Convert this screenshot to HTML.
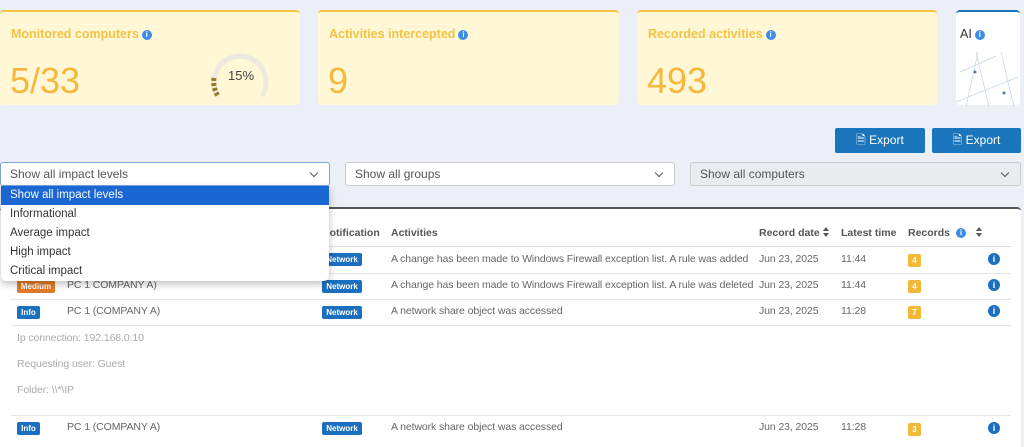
<!DOCTYPE html>
<html><head><meta charset="utf-8"><style>
*{box-sizing:border-box;margin:0;padding:0}
body{width:1024px;height:441px;overflow:hidden;background:#eceff5;font-family:"Liberation Sans",sans-serif;position:relative;color:#555}
.card{position:absolute;top:10px;height:95px;background:#fff7d6;border-top:2px solid #f5c242;border-radius:4px}
.card .t{position:absolute;left:11px;top:15px;font-size:12.5px;font-weight:bold;color:#f5c242}
.card .n{position:absolute;left:10px;top:48px;font-size:36px;color:#f5b83a;font-weight:300}
.i{display:inline-block;width:10px;height:10px;border-radius:50%;background:#3b8ee8;color:#fff;font-size:8px;text-align:center;line-height:10px;font-weight:bold;vertical-align:1px;margin-left:3px}
.btn{position:absolute;top:128px;height:25px;background:#1b75bc;color:#fff;font-size:12px;text-align:center;line-height:25px;border-radius:2px}
.sel{position:absolute;top:162px;height:24px;border:1px solid #ccc;border-radius:3px;background:#fff;font-size:12px;line-height:22px;padding-left:9px;color:#555}
.sel:after{content:"";position:absolute;right:12px;top:7px;width:5px;height:5px;border-right:1.5px solid #555;border-bottom:1.5px solid #555;transform:rotate(45deg)}
.dd{position:absolute;left:1px;top:186px;width:328px;height:95px;background:#fff;border-radius:0 0 5px 5px;box-shadow:0 3px 8px rgba(0,0,0,.25);font-size:11.5px;color:#333;z-index:5}
.dd div{height:19px;line-height:19px;padding-left:9px}
.dd .a{background:#1a66d2;color:#fff}
.panel{position:absolute;left:0;top:207px;width:1021px;height:240px;background:#fff;border-top:2px solid #555;border-radius:4px 4px 0 0}
.txt{position:absolute;font-size:10.5px;color:#666;white-space:nowrap;letter-spacing:-.1px}
.h{position:absolute;font-size:10.5px;font-weight:bold;color:#555;top:227px;white-space:nowrap;line-height:13px}
.s{display:inline-block;width:7px;height:10px;position:relative;vertical-align:-1px;margin-left:3px}
.s:before,.s:after{content:"";position:absolute;left:0;border-left:3.5px solid transparent;border-right:3.5px solid transparent}
.s:before{top:0;border-bottom:4px solid #555}.s:after{bottom:0;border-top:4px solid #555}
.line{position:absolute;left:11px;width:1000px;height:1px;background:#e5e5e5}
.b{position:absolute;height:13px;font-size:8px;font-weight:bold;color:#fff;line-height:13px;text-align:center;border-radius:2px}
.ic{position:absolute;left:988px;width:12px;height:12px;border-radius:50%;background:#1b6fbf;color:#fff;font-size:9px;font-weight:bold;text-align:center;line-height:12px}
</style></head><body>
<div class="card" style="left:0;width:300px"><div class="t">Monitored computers<span class="i">i</span></div><div class="n">5/33</div>
<svg style="position:absolute;left:208px;top:34px" width="64" height="64" viewBox="0 0 64 64"><path d="M10 50 A 26 26 0 1 1 54 50" fill="none" stroke="#eee9dd" stroke-width="5"/><path d="M6 32 A26 26 0 0 0 10 50" fill="none" stroke="#9a7a2a" stroke-width="5" stroke-dasharray="3 2"/><text x="33" y="34" font-size="13" fill="#444" text-anchor="middle" font-family="Liberation Sans">15%</text></svg></div>
<div class="card" style="left:318px;width:301px"><div class="t">Activities intercepted<span class="i">i</span></div><div class="n">9</div></div>
<div class="card" style="left:637px;width:300px"><div class="t">Recorded activities<span class="i">i</span></div><div class="n">493</div></div>
<div class="card" style="left:956px;width:64px;background:#fff;border-top-color:#1b75bc"><div class="t" style="color:#333;left:4px;font-weight:normal">AI<span class="i">i</span></div>
<svg style="position:absolute;left:0;top:40px" width="64" height="55"><g stroke="#c5d3e3" stroke-width=".7"><line x1="4" y1="20" x2="40" y2="4"/><line x1="20" y1="0" x2="33" y2="55"/><line x1="0" y1="50" x2="62" y2="25"/><line x1="45" y1="0" x2="58" y2="55"/><line x1="10" y1="55" x2="22" y2="0"/></g><circle cx="19" cy="20" r="1.5" fill="#4a7ab0"/><circle cx="48" cy="41" r="1.5" fill="#4a7ab0"/></svg></div>
<div class="btn" style="left:835px;width:90px">&#128462; Export</div>
<div class="btn" style="left:932px;width:89px">&#128462; Export</div>
<div class="sel" style="left:0;width:330px;border-color:#7aa7d8">Show all impact levels</div>
<div class="sel" style="left:345px;width:330px">Show all groups</div>
<div class="sel" style="left:690px;width:331px;background:#e9ecef">Show all computers</div>
<div class="dd"><div class="a">Show all impact levels</div><div>Informational</div><div>Average impact</div><div>High impact</div><div>Critical impact</div></div>
<div class="panel"></div>
<div class="h" style="left:322px">Notification</div><div class="h" style="left:391px">Activities</div>
<div class="h" style="left:759px">Record date<span class="s"></span></div><div class="h" style="left:841px">Latest time</div><div class="h" style="left:908px">Records <span class="i">i</span><span class="s" style="margin-left:10px"></span></div>
<div class="line" style="top:246px;background:#ddd"></div>
<div class="line" style="top:273px"></div><div class="line" style="top:299px"></div><div class="line" style="top:325px"></div><div class="line" style="top:415px"></div>
<div class="b" style="left:322px;top:253px;width:40px;background:#1b6fbf">Network</div>
<div class="txt" style="left:391px;top:253px">A change has been made to Windows Firewall exception list. A rule was added</div>
<div class="txt" style="left:759px;top:253px">Jun 23, 2025</div><div class="txt" style="left:841px;top:253px">11:44</div>
<div class="b" style="left:908px;top:254px;width:13px;background:#f2b936">4</div><div class="ic" style="top:253px">i</div>
<div class="b" style="left:17px;top:280px;width:38px;background:#e07b27">Medium</div>
<div class="txt" style="left:67px;top:279px">PC 1 COMPANY A)</div>
<div class="b" style="left:322px;top:280px;width:40px;background:#1b6fbf">Network</div>
<div class="txt" style="left:391px;top:279px">A change has been made to Windows Firewall exception list. A rule was deleted</div>
<div class="txt" style="left:759px;top:279px">Jun 23, 2025</div><div class="txt" style="left:841px;top:279px">11:44</div>
<div class="b" style="left:908px;top:280px;width:13px;background:#f2b936">4</div><div class="ic" style="top:279px">i</div>
<div class="b" style="left:17px;top:306px;width:23px;background:#1b6fbf">Info</div>
<div class="txt" style="left:67px;top:305px">PC 1 (COMPANY A)</div>
<div class="b" style="left:322px;top:306px;width:40px;background:#1b6fbf">Network</div>
<div class="txt" style="left:391px;top:305px">A network share object was accessed</div>
<div class="txt" style="left:759px;top:305px">Jun 23, 2025</div><div class="txt" style="left:841px;top:305px">11:28</div>
<div class="b" style="left:908px;top:306px;width:13px;background:#f2b936">7</div><div class="ic" style="top:305px">i</div>
<div class="txt" style="left:17px;top:332px;color:#aaa">Ip connection: 192.168.0.10</div>
<div class="txt" style="left:17px;top:358px;color:#aaa">Requesting user: Guest</div>
<div class="txt" style="left:17px;top:384px;color:#aaa">Folder: \\*\IP</div>
<div class="b" style="left:17px;top:422px;width:23px;background:#1b6fbf">Info</div>
<div class="txt" style="left:67px;top:421px">PC 1 (COMPANY A)</div>
<div class="b" style="left:322px;top:422px;width:40px;background:#1b6fbf">Network</div>
<div class="txt" style="left:391px;top:421px">A network share object was accessed</div>
<div class="txt" style="left:759px;top:421px">Jun 23, 2025</div><div class="txt" style="left:841px;top:421px">11:28</div>
<div class="b" style="left:908px;top:423px;width:13px;background:#f2b936">3</div><div class="ic" style="top:422px">i</div>
</body></html>
